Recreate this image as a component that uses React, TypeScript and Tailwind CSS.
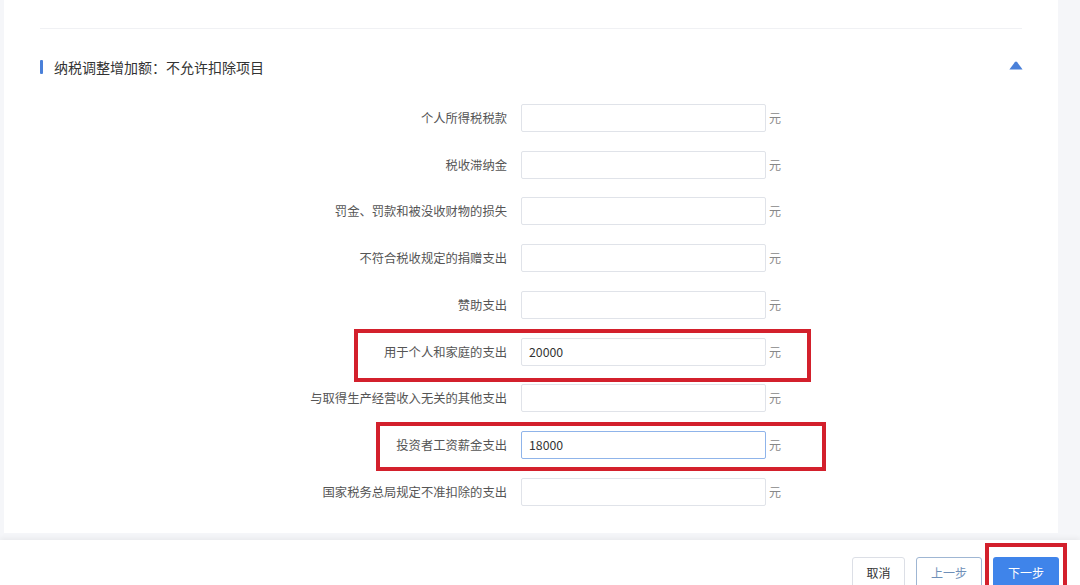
const rows: { label: string; value?: string; focused?: boolean }[] = [
  { label: "个人所得税税款" },
  { label: "税收滞纳金" },
  { label: "罚金、罚款和被没收财物的损失" },
  { label: "不符合税收规定的捐赠支出" },
  { label: "赞助支出" },
  { label: "用于个人和家庭的支出", value: "20000" },
  { label: "与取得生产经营收入无关的其他支出" },
  { label: "投资者工资薪金支出", value: "18000", focused: true },
  { label: "国家税务总局规定不准扣除的支出" },
];

function FormRow({ label, value, focused }: { label: string; value?: string; focused?: boolean }) {
  return (
    <div className="flex h-[46.75px] items-center">
      <div className="w-[503px] text-right text-[12.3px] text-[#555]">{label}</div>
      <div
        className={`ml-[14px] flex h-[28px] w-[245px] items-center rounded-[2px] border bg-white px-[7px] text-[12.3px] text-[#333] ${focused ? "border-[#8fb4ea]" : "border-[#e0e3e9]"}`}
      >
        {value}
      </div>
      <span className="ml-[3px] text-[12px] text-[#888]">元</span>
    </div>
  );
}

export default function App() {
  return (
    <div className="flex h-[585px] w-[1080px] flex-col overflow-hidden bg-[#f5f6f9] font-['Noto_Sans_CJK_SC',sans-serif]">
      {/* Main */}
      <main className="h-[540px] shrink-0 pb-[7px] pl-[4px] pr-[22px]">
        <div className="relative h-full bg-white pt-[28px]">
          <div className="mx-[36px] border-t border-[#f0f1f4]" />

          {/* Section header */}
          <div className="mt-[23px] flex h-[30px] items-center pl-[36px] pr-[35px]">
            <span className="h-[14px] w-[3px] rounded-[1px] bg-[#4a80d9]" />
            <span className="ml-[11px] text-[14px] text-[#333]">纳税调整增加额：不允许扣除项目</span>
            <svg className="mb-[4px] ml-auto" width="14" height="9" viewBox="0 0 14 9">
              <path d="M7 0.5 Q7.6 0.5 8.2 1.2 L13.6 8.5 L0.4 8.5 L5.8 1.2 Q6.4 0.5 7 0.5 Z" fill="#4a80d9" />
            </svg>
          </div>

          {/* Rows */}
          <div className="mt-[12.6px] flex flex-col">
            {rows.map((r) => (
              <FormRow key={r.label} {...r} />
            ))}
          </div>

          {/* annotation boxes */}
          <div className="absolute left-[350px] top-[329px] h-[53px] w-[457px] border-[4px] border-[#d3202c]" />
          <div className="absolute left-[372px] top-[422px] h-[49px] w-[450px] border-[4px] border-[#d3202c]" />
        </div>
      </main>

      {/* Footer */}
      <footer className="relative flex h-[45px] shrink-0 items-start justify-end gap-[11px] bg-white pr-[21px] pt-[17px] shadow-[0_-2px_5px_rgba(0,0,0,0.05)]">
        <button className="h-[32px] w-[53px] rounded-[3px] border border-[#dcdfe6] bg-white text-[12px] text-[#333]">
          取消
        </button>
        <button className="h-[32px] w-[66px] rounded-[3px] border border-[#9fb6d3] bg-white text-[12px] text-[#6f8fb8]">
          上一步
        </button>
        <button className="h-[32px] w-[66px] rounded-[3px] bg-[#3f84ea] text-[12px] text-white">下一步</button>
        <div className="absolute left-[985px] top-[3px] h-[46px] w-[82px] border-[4px] border-[#d3202c]" />
      </footer>
    </div>
  );
}
